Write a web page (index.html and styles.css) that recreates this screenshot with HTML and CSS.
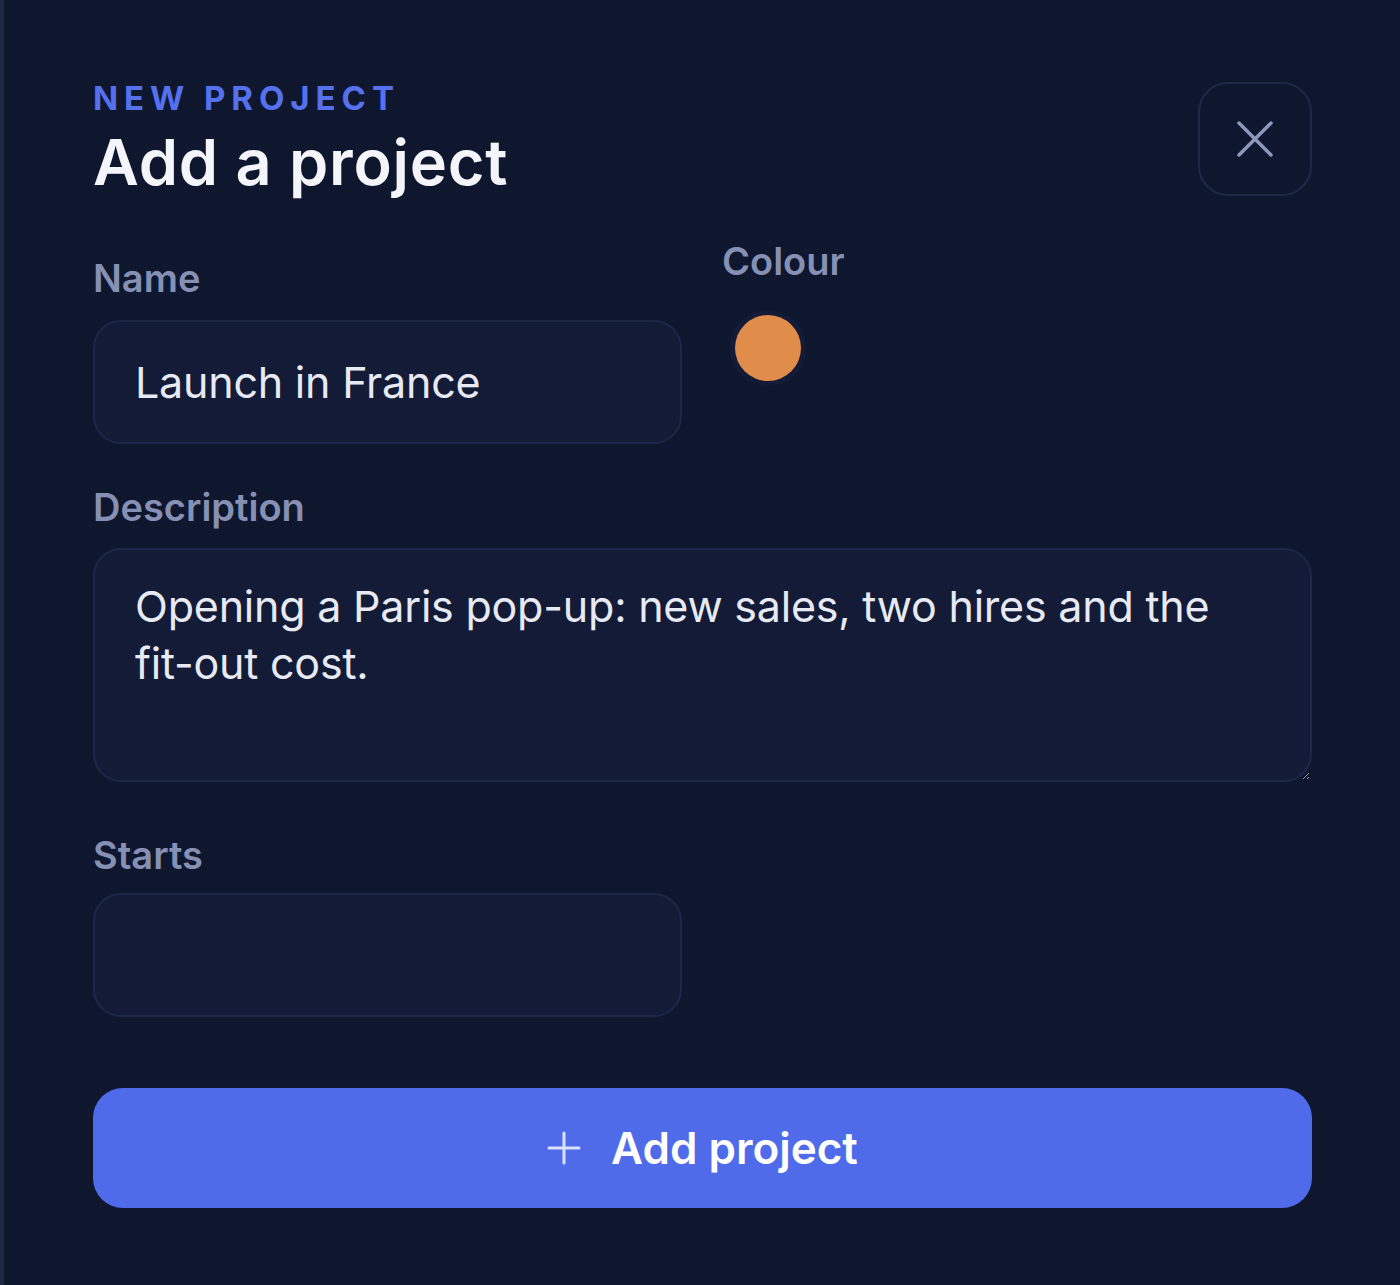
FILE: index.html
```html
<!DOCTYPE html>
<html>
<head>
  <meta charset="UTF-8">
  <title>Add a project</title>
  <link rel="stylesheet" href="styles.css">
</head>
<body>
  <div class="panel">
    <header class="panel-head">
      <div class="heading">
        <p class="eyebrow">NEW PROJECT</p>
        <h1 class="title">Add a project</h1>
      </div>
      <button type="button" class="close-button" aria-label="Close">
        <svg width="36" height="36" viewBox="0 0 36 36" fill="none" stroke="currentColor" stroke-width="3.5" stroke-linecap="round">
          <path d="M2 2L34 34M34 2L2 34"/>
        </svg>
      </button>
    </header>

    <form class="project-form">
      <div class="row">
        <label class="field field-name">
          <span class="field-label">Name</span>
          <input type="text" class="text-input" value="Launch in France">
        </label>
        <div class="field field-colour">
          <span class="field-label">Colour</span>
          <div class="swatches">
            <button type="button" class="swatch" aria-label="Orange"></button>
          </div>
        </div>
      </div>

      <label class="field field-description">
        <span class="field-label">Description</span>
        <textarea class="text-area">Opening a Paris pop-up: new sales, two hires and the fit-out cost.</textarea>
      </label>

      <label class="field field-starts">
        <span class="field-label">Starts</span>
        <input type="text" class="text-input">
      </label>

      <button type="submit" class="submit-button">
        <svg width="34" height="34" viewBox="0 0 34 34" fill="none" stroke="currentColor" stroke-width="3" stroke-linecap="round">
          <path d="M17 2V32M2 17H32"/>
        </svg>
        Add project
      </button>
    </form>
  </div>
</body>
</html>
```

FILE: styles.css
```css
body {
  margin: 0;
  background-color: #0f172e;
  font-family: Inter, 'Noto Sans', sans-serif;
}

.panel {
  min-height: 1285px;
  box-sizing: border-box;
  border-left: 4px solid #1c2744;
  padding: 78px 88px 0 89px;
}

.panel-head {
  display: flex;
  justify-content: space-between;
  align-items: center;
}

.eyebrow {
  margin: 0;
  font-size: 33px;
  line-height: 40px;
  font-weight: 700;
  letter-spacing: 0.18em;
  color: #5571ee;
}

.title {
  margin: 7px 0 0;
  font-size: 63px;
  line-height: 74px;
  font-weight: 600;
  letter-spacing: 0.012em;
  color: #f3f5fa;
}

.close-button {
  display: flex;
  align-items: center;
  justify-content: center;
  width: 114px;
  height: 114px;
  padding: 0;
  background: transparent;
  border: 2px solid #1e2946;
  border-radius: 30px;
  color: #8d97bd;
  cursor: pointer;
}

.project-form {
  display: flex;
  flex-direction: column;
}

.row {
  display: flex;
  align-items: flex-start;
  gap: 40px;
  margin-top: 39px;
}

.field {
  display: block;
}

.field-label {
  display: block;
  margin-bottom: 19px;
  font-size: 38px;
  line-height: 46px;
  font-weight: 600;
  color: #8690b4;
}

.field-name {
  width: 589px;
  padding-top: 17px;
}

.field-colour .field-label {
  margin-bottom: 31px;
}

.swatches {
  display: flex;
  gap: 20px;
  padding-left: 13px;
}

.swatch {
  width: 66px;
  height: 66px;
  padding: 0;
  border: none;
  border-radius: 50%;
  background-color: #e08c4a;
  box-shadow: 0 0 0 5px #131b37;
  cursor: pointer;
}

.text-input {
  display: block;
  width: 100%;
  height: 124px;
  box-sizing: border-box;
  padding: 0 40px;
  background-color: #131b37;
  border: 2px solid #1d2747;
  border-radius: 28px;
  font-family: Inter, 'Noto Sans', sans-serif;
  font-size: 43px;
  letter-spacing: -0.005em;
  color: #e7eaf3;
  outline: none;
}

.field-starts .text-input {
  width: 589px;
}

.field-description {
  margin-top: 40px;
}

.field-description .field-label {
  margin-bottom: 18px;
}

.text-area {
  display: block;
  width: 100%;
  height: 234px;
  box-sizing: border-box;
  padding: 28px 40px;
  background-color: #131b37;
  border: 2px solid #1d2747;
  border-radius: 28px;
  font-family: Inter, 'Noto Sans', sans-serif;
  font-size: 43px;
  line-height: 57px;
  letter-spacing: -0.005em;
  color: #e7eaf3;
  color-scheme: dark;
  outline: none;
}

.field-starts {
  margin-top: 50px;
}

.field-starts .field-label {
  margin-bottom: 15px;
}

.submit-button {
  display: flex;
  align-items: center;
  justify-content: center;
  gap: 30px;
  height: 120px;
  margin-top: 71px;
  background-color: #4f6bea;
  border: none;
  border-radius: 30px;
  color: #ffffff;
  font-family: Inter, 'Noto Sans', sans-serif;
  font-size: 44px;
  font-weight: 600;
  cursor: pointer;
}

.submit-button svg {
  color: rgba(255, 255, 255, 0.8);
}
```
